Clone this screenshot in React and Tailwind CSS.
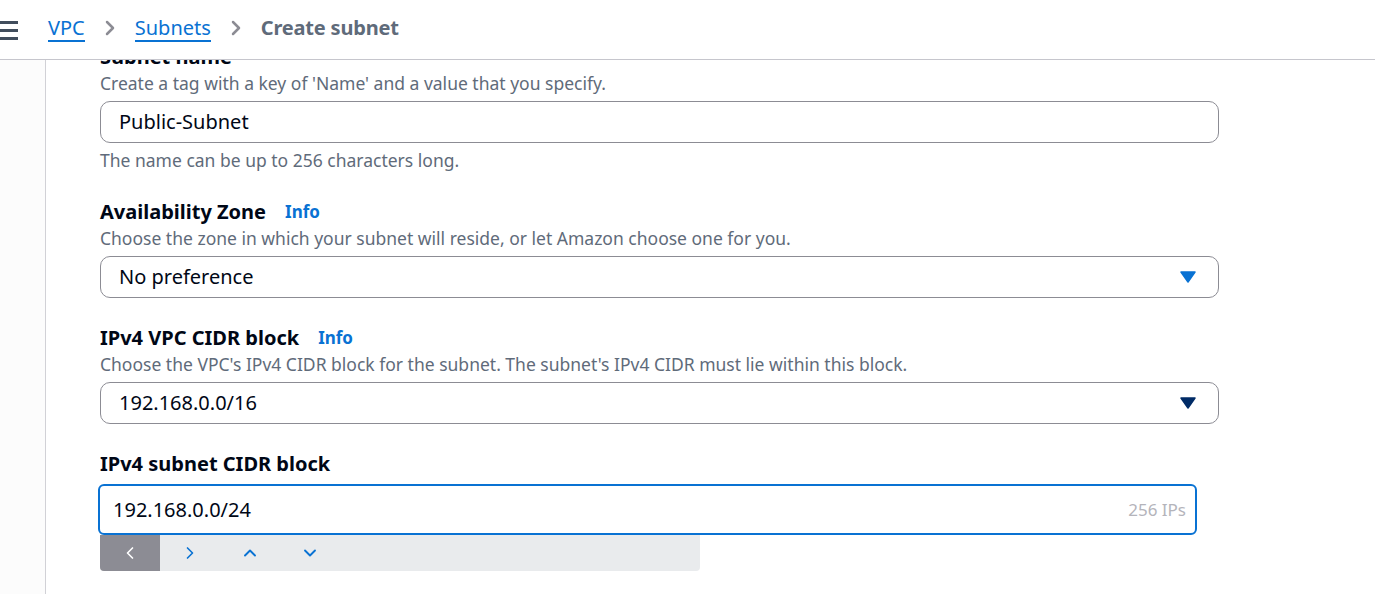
import React from 'react';
import { ChevronLeft, ChevronRight, ChevronUp, ChevronDown } from 'lucide-react';

const font = { fontFamily: '"Noto Sans", "Open Sans", Arial, sans-serif' };

function Caret({ color }) {
  return (
    <svg width="16" height="12" viewBox="0 0 16 12" className="shrink-0">
      <path d="M1 1 H15 L8 11 Z" fill={color} stroke={color} strokeWidth="1.5" strokeLinejoin="round" />
    </svg>
  );
}

function Label({ children, info }) {
  return (
    <div className="flex items-center gap-[19px] h-[24px] text-[20px] font-bold text-[#000716] leading-[24px]">
      <span>{children}</span>
      {info && <span className="text-[17px] text-[#0972d3]">Info</span>}
    </div>
  );
}

function Desc({ children, className = '' }) {
  return <div className={`text-[17.5px] leading-[22px] text-[#5f6b7a] ${className}`}>{children}</div>;
}

function Select({ value, caret }) {
  return (
    <div className="mt-[7px] w-[1119px] h-[42px] rounded-[10px] border border-[#8c8c94] flex items-center justify-between pl-[18px] pr-[22px] text-[20px] text-[#000716]">
      <span>{value}</span>
      <Caret color={caret} />
    </div>
  );
}

export default function App() {
  return (
    <div className="h-screen flex flex-col overflow-hidden bg-white" style={font}>
      <header className="h-[60px] shrink-0 border-b border-[#c6c6cd] flex items-center relative z-10 bg-white">
        <div className="flex flex-col gap-[5px] w-[18px] ml-0 mt-[1px]">
          <span className="h-[3px] bg-[#414d5c]" />
          <span className="h-[3px] bg-[#414d5c]" />
          <span className="h-[3px] bg-[#414d5c]" />
        </div>
        <nav className="flex items-center ml-[30px] text-[20px] leading-[28px] mt-[-3px]">
          <span className="text-[#0972d3] border-b-2 border-[#0972d3] leading-[25px]">VPC</span>
          <ChevronRight size={24} strokeWidth={2.5} className="text-[#8c8c94] mx-[13px]" />
          <span className="text-[#0972d3] border-b-2 border-[#0972d3] leading-[25px]">Subnets</span>
          <ChevronRight size={24} strokeWidth={2.5} className="text-[#8c8c94] mx-[13px]" />
          <span className="text-[#5f6b7a] font-bold tracking-[-0.2px]">Create subnet</span>
        </nav>
      </header>
      <div className="flex flex-1 overflow-hidden">
        <aside className="w-[46px] shrink-0 bg-[#fcfcfc] border-r border-[#d1d1d6]" />
        <main className="flex-1 pl-[54px] -mt-[15px]">
          <Label>Subnet name</Label>
          <Desc className="mt-[3px]">Create a tag with a key of 'Name' and a value that you specify.</Desc>
          <div className="mt-[7px] w-[1119px] h-[42px] rounded-[10px] border border-[#8c8c94] flex items-center pl-[18px] text-[20px] text-[#000716]">
            Public-Subnet
          </div>
          <Desc className="mt-[6px]">The name can be up to 256 characters long.</Desc>

          <div className="mt-[29px]">
            <Label info>Availability Zone</Label>
            <Desc className="mt-[3px]">Choose the zone in which your subnet will reside, or let Amazon choose one for you.</Desc>
            <Select value="No preference" caret="#0972d3" />
          </div>

          <div className="mt-[28px]">
            <Label info>IPv4 VPC CIDR block</Label>
            <Desc className="mt-[3px]">Choose the VPC's IPv4 CIDR block for the subnet. The subnet's IPv4 CIDR must lie within this block.</Desc>
            <Select value="192.168.0.0/16" caret="#002b66" />
          </div>

          <div className="mt-[28px]">
            <Label>IPv4 subnet CIDR block</Label>
            <div className="mt-[8px] -ml-[2px] w-[1099px] h-[51px] rounded-[6px] border-2 border-[#0972d3] flex items-center justify-between pl-[13px] pr-[9px] text-[20px] text-[#000716]">
              <span>192.168.0.0/24</span>
              <span className="text-[17px] text-[#b4b4bb]">256 IPs</span>
            </div>
            <div className="w-[600px] h-[36px] bg-[#e9ebed] rounded-b-[4px] flex overflow-hidden">
              <div className="w-[60px] bg-[#8c8c94] flex items-center justify-center">
                <ChevronLeft size={20} strokeWidth={2} className="text-white" />
              </div>
              <div className="w-[60px] flex items-center justify-center">
                <ChevronRight size={20} strokeWidth={2} className="text-[#0972d3]" />
              </div>
              <div className="w-[60px] flex items-center justify-center">
                <ChevronUp size={20} strokeWidth={2.25} className="text-[#0972d3]" />
              </div>
              <div className="w-[60px] flex items-center justify-center">
                <ChevronDown size={20} strokeWidth={2.25} className="text-[#0972d3]" />
              </div>
            </div>
          </div>
        </main>
      </div>
    </div>
  );
}
